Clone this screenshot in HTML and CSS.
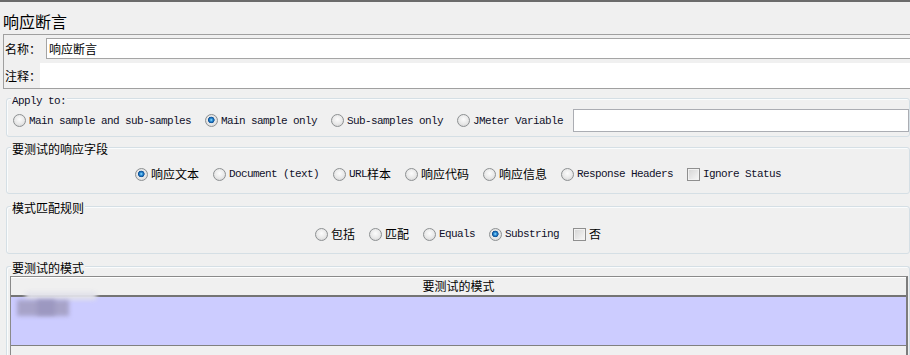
FILE: index.html
```html
<!DOCTYPE html>
<html lang="zh">
<head>
  <meta charset="UTF-8" />
  <meta name="viewport" content="width=device-width, initial-scale=1.0"/>
  <title>响应断言</title>
  <link rel="stylesheet" href="styles.css">
</head>
<body>
  <div class="page-title">响应断言</div>

  <div class="info">
    <div class="field-row name-row">
      <span class="name-label">名称：</span>
      <div class="name-input">响应断言</div>
    </div>
    <div class="field-row comment-row">
      <span class="comment-label">注释：</span>
      <div class="comment-input"></div>
    </div>
  </div>

  <div class="group apply">
    <span class="group-title mono">Apply to:</span>
    <div class="opts left">
      <label class="opt"><span class="radio"></span><span class="mono">Main sample and sub-samples</span></label>
      <label class="opt"><span class="radio on"></span><span class="mono">Main sample only</span></label>
      <label class="opt"><span class="radio"></span><span class="mono">Sub-samples only</span></label>
      <label class="opt"><span class="radio"></span><span class="mono">JMeter Variable</span></label>
      <div class="var-input"></div>
    </div>
  </div>

  <div class="group">
    <span class="group-title">要测试的响应字段</span>
    <div class="opts">
      <label class="opt"><span class="radio on"></span>响应文本</label>
      <label class="opt"><span class="radio"></span><span class="mono">Document (text)</span></label>
      <label class="opt"><span class="radio"></span><span class="mono">URL</span>样本</label>
      <label class="opt"><span class="radio"></span>响应代码</label>
      <label class="opt"><span class="radio"></span>响应信息</label>
      <label class="opt"><span class="radio"></span><span class="mono">Response Headers</span></label>
      <label class="opt"><span class="check"></span><span class="mono">Ignore Status</span></label>
    </div>
  </div>

  <div class="group">
    <span class="group-title">模式匹配规则</span>
    <div class="opts">
      <label class="opt"><span class="radio"></span>包括</label>
      <label class="opt"><span class="radio"></span>匹配</label>
      <label class="opt"><span class="radio"></span><span class="mono">Equals</span></label>
      <label class="opt"><span class="radio on"></span><span class="mono">Substring</span></label>
      <label class="opt"><span class="check"></span>否</label>
    </div>
  </div>

  <div class="group patterns">
    <span class="group-title">要测试的模式</span>
    <div class="table">
      <div class="thead">要测试的模式</div>
      <div class="trow selected">
        <div class="smudge">
          <span class="blob light"></span>
          <span class="blob dark"></span>
          <span class="blob mid"></span>
        </div>
      </div>
    </div>
  </div>
</body>
</html>
```

FILE: styles.css
```css
html {
  overflow: hidden;
}

body {
  margin: 0;
  width: 910px;
  height: 353px;
  overflow: hidden;
  background: #f0f0f0;
  border-top: 2px solid #6b6b6b;
  font-family: "Noto Sans CJK SC", "Liberation Sans", sans-serif;
  font-size: 12px;
  color: #000;
}

.mono {
  font-family: "Liberation Mono", "Noto Sans CJK SC", monospace;
  font-size: 11px;
  letter-spacing: -0.6px;
  color: #10102a;
}

.page-title {
  height: 26px;
  padding: 6px 0 0 3px;
  font-size: 16px;
  line-height: 26px;
}

/* name / comment box */
.info {
  margin-left: 3px;
  padding-top: 3px;
  border: 1px solid #a0a0a0;
  border-right: none;
}

.field-row {
  display: flex;
  align-items: center;
}

.name-row {
  height: 21px;
}

.name-label {
  flex: none;
  width: 41px;
  padding-left: 1px;
  white-space: nowrap;
}

.name-input {
  flex: 1;
  height: 21px;
  box-sizing: border-box;
  border: 1px solid #a5a5a5;
  border-right: none;
  background: #fff;
  padding-left: 2px;
  line-height: 19px;
}

.comment-row {
  margin-top: 4px;
  height: 25px;
}

.comment-label {
  flex: none;
  width: 35px;
  padding-left: 1px;
  white-space: nowrap;
}

.comment-input {
  flex: 1;
  align-self: stretch;
  background: #fff;
}

/* titled groups */
.group {
  margin: 9px 0 0 6px;
  border: 1px solid #d5dfe5;
  border-radius: 3px;
  box-shadow: inset 1px 1px 0 #fafcfd;
  padding-bottom: 11px;
}

.group + .group {
  margin-top: 10px;
}

.group + .group + .group,
.group.patterns {
  margin-top: 12px;
}

.group-title {
  display: block;
  width: max-content;
  margin: -6px 0 0 4px;
  padding: 0 1px;
  background: #f0f0f0;
  line-height: 14px;
}

.group-title.mono {
  margin-top: -5px;
}

.opts {
  display: flex;
  align-items: center;
  justify-content: center;
  gap: 14px;
  height: 16px;
  margin-top: 11px;
}

.group:nth-of-type(4) .opts {
  margin-top: 10px;
}

.apply {
  padding-bottom: 4px;
}

.opts.left {
  justify-content: flex-start;
  height: 23px;
  margin-top: 1px;
  padding-left: 6px;
}

.opt {
  display: flex;
  align-items: center;
  white-space: nowrap;
  line-height: 16px;
}

.radio {
  flex: none;
  width: 13px;
  height: 13px;
  box-sizing: border-box;
  margin-right: 3px;
  border: 1px solid #8d9092;
  border-radius: 50%;
  background: radial-gradient(circle at 50% 40%, #fcfcfc 0, #e8e8e8 55%, #cdcdcd 100%);
}

.radio.on {
  background: radial-gradient(circle at 48% 45%, #9be6ff 0, #2f8fd8 1.4px, #0b4d92 3px, #eaeaea 3.6px, #d2d2d2 100%);
}

.check {
  flex: none;
  width: 13px;
  height: 13px;
  box-sizing: border-box;
  margin-right: 3px;
  border: 1px solid #8f8f8f;
  background: linear-gradient(135deg, #d4d4d4, #f8f8f8);
  box-shadow: inset 0 0 0 1px #f2f2f2;
}

.var-input {
  flex: 1;
  align-self: stretch;
  margin-left: -4px;
  border: 1px solid #abadb3;
  background: #fff;
}

/* pattern table */
.patterns {
  height: 88px;
  padding-bottom: 0;
  border-bottom: none;
  border-radius: 3px 3px 0 0;
}

.table {
  margin: 1px 1px 0 3px;
  height: 79px;
  border: 1px solid #8a8a8a;
  border-bottom: none;
  border-right: 2px solid #7c7c7c;
  box-sizing: border-box;
}

.thead {
  height: 18px;
  line-height: 18px;
  text-align: center;
  border-bottom: 2px solid #747474;
  box-shadow: inset 0 1px 0 #fff;
}

.trow {
  position: relative;
  height: 48px;
  border-bottom: 1px solid #808080;
}

.selected {
  background: #ccccff;
}

.smudge {
  position: absolute;
  left: 0;
  top: -5px;
  width: 90px;
  height: 32px;
}

.blob {
  position: absolute;
  filter: blur(2px);
}

.blob.light {
  left: 14px;
  top: 0;
  width: 72px;
  height: 8px;
  border-radius: 6px;
  background: #e2e2ea;
}

.blob.dark {
  left: 6px;
  top: 8px;
  width: 52px;
  height: 16px;
  background: #a7a3c9;
}

.blob.mid {
  left: 26px;
  top: 8px;
  width: 18px;
  height: 15px;
  background: #9c98c0;
}
```
